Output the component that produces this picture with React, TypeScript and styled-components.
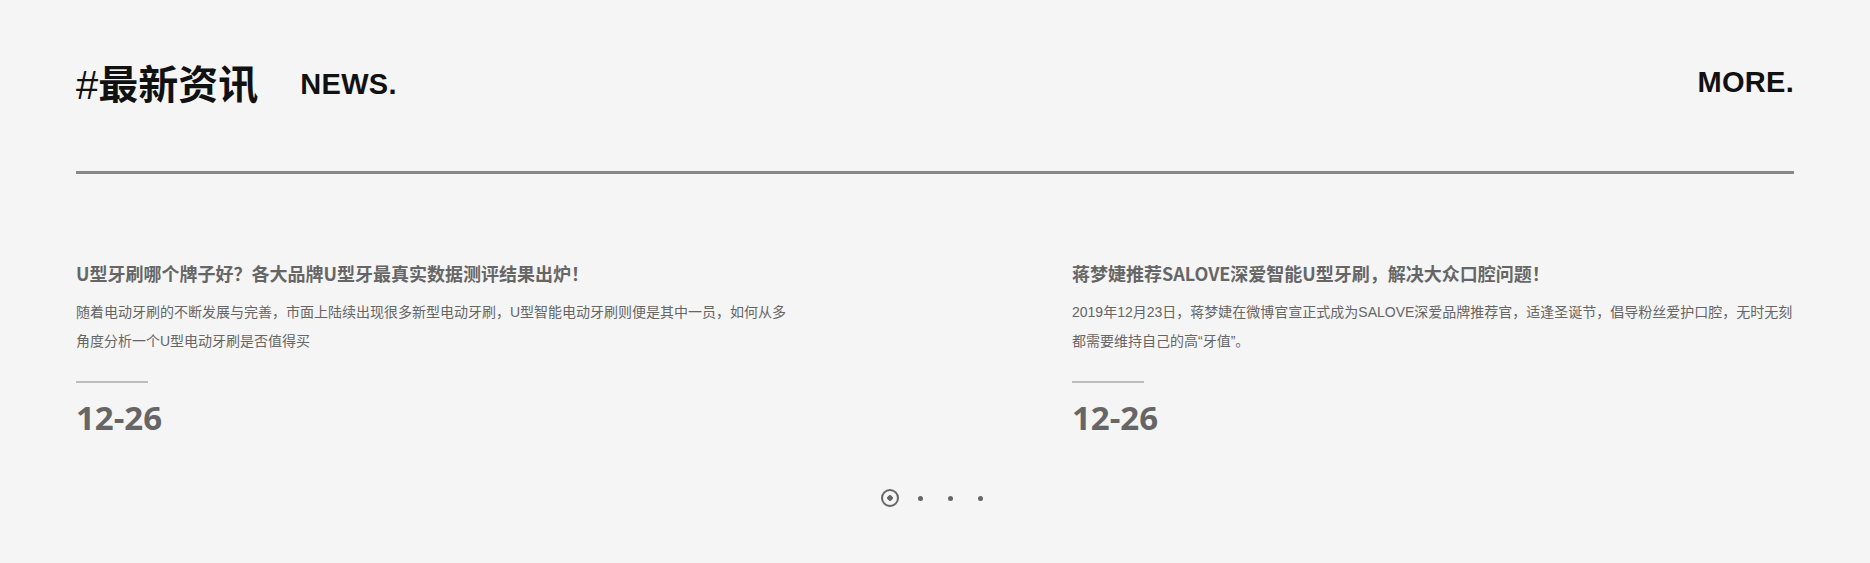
import React from "react";
import styled, { createGlobalStyle } from "styled-components";

const GlobalStyle = createGlobalStyle`
  html, body {
    margin: 0;
    padding: 0;
    background: #f5f5f5;
  }
  body {
    font-family: "Liberation Sans", "Noto Sans CJK SC", sans-serif;
  }
`;

const Section = styled.section`
  width: 1718px;
  margin: 0 auto;
  padding-top: 62px;
  padding-bottom: 50px;
`;

const Header = styled.div`
  display: flex;
  justify-content: space-between;
  align-items: center;
  height: 46px;
`;

const TitleGroup = styled.div`
  display: flex;
  align-items: center;
  gap: 42px;
`;

const Title = styled.h2`
  margin: 0;
  font-family: "Liberation Sans", "Noto Sans CJK SC", sans-serif;
  font-size: 40px;
  line-height: 46px;
  font-weight: 700;
  color: #111;
  span {
    font-weight: 400;
  }
`;

const EnLabel = styled.span<{ $up?: number }>`
  font-family: "Liberation Sans", sans-serif;
  font-size: 29px;
  font-weight: 700;
  color: #111;
  letter-spacing: 0.3px;
  position: relative;
  top: ${(p) => -(p.$up ?? 0)}px;
`;

const Divider = styled.div`
  height: 3px;
  background: #888;
  margin-top: 63px;
`;

const List = styled.div`
  display: flex;
  justify-content: space-between;
  margin-top: 86px;
`;

const Item = styled.article`
  width: 722px;
  color: #666;
`;

const ItemTitle = styled.h3`
  margin: 0;
  font-family: "Noto Sans CJK SC", sans-serif;
  font-size: 18px;
  line-height: 26px;
  font-weight: 700;
  color: #666;
`;

const ItemDesc = styled.p`
  margin: 12px 0 0;
  font-family: "Liberation Sans", "Noto Sans CJK SC", sans-serif;
  font-size: 14px;
  line-height: 29px;
  color: #666;
`;

const ShortRule = styled.div`
  width: 72px;
  height: 2px;
  background: #bbb;
  margin-top: 25px;
`;

const DateText = styled.div`
  font-family: "Open Sans", sans-serif;
  font-size: 33px;
  font-weight: 700;
  line-height: 40px;
  color: #666;
  margin-top: 15px;
`;

const Pager = styled.div`
  display: flex;
  justify-content: center;
  align-items: center;
  gap: 30px;
  margin-top: 51px;
  height: 18px;
`;

const Dot = styled.span<{ $active?: boolean }>`
  display: flex;
  align-items: center;
  justify-content: center;
  width: 0;
  height: 18px;
  &::before {
    content: "";
    flex: none;
    box-sizing: border-box;
    width: ${(p) => (p.$active ? 18 : 5)}px;
    height: ${(p) => (p.$active ? 18 : 5)}px;
    border-radius: 50%;
    background: ${(p) =>
      p.$active
        ? "radial-gradient(circle, #666 0 2.5px, transparent 3px)"
        : "#666"};
    border: ${(p) => (p.$active ? "2px solid #666" : "none")};
  }
`;

const news = [
  {
    title: "U型牙刷哪个牌子好？各大品牌U型牙最真实数据测评结果出炉！",
    desc: "随着电动牙刷的不断发展与完善，市面上陆续出现很多新型电动牙刷，U型智能电动牙刷则便是其中一员，如何从多角度分析一个U型电动牙刷是否值得买",
    date: "12-26",
  },
  {
    title: "蒋梦婕推荐SALOVE深爱智能U型牙刷，解决大众口腔问题！",
    desc: "2019年12月23日，蒋梦婕在微博官宣正式成为SALOVE深爱品牌推荐官，适逢圣诞节，倡导粉丝爱护口腔，无时无刻都需要维持自己的高“牙值”。",
    date: "12-26",
  },
];

export default function App() {
  return (
    <>
      <GlobalStyle />
      <Section>
        <Header>
          <TitleGroup>
            <Title>
              <span>#</span>最新资讯
            </Title>
            <EnLabel $up={1}>NEWS.</EnLabel>
          </TitleGroup>
          <EnLabel $up={3}>MORE.</EnLabel>
        </Header>
        <Divider />
        <List>
          {news.map((n, i) => (
            <Item key={i}>
              <ItemTitle>{n.title}</ItemTitle>
              <ItemDesc>{n.desc}</ItemDesc>
              <ShortRule />
              <DateText>{n.date}</DateText>
            </Item>
          ))}
        </List>
        <Pager>
          <Dot $active />
          <Dot />
          <Dot />
          <Dot />
        </Pager>
      </Section>
    </>
  );
}
